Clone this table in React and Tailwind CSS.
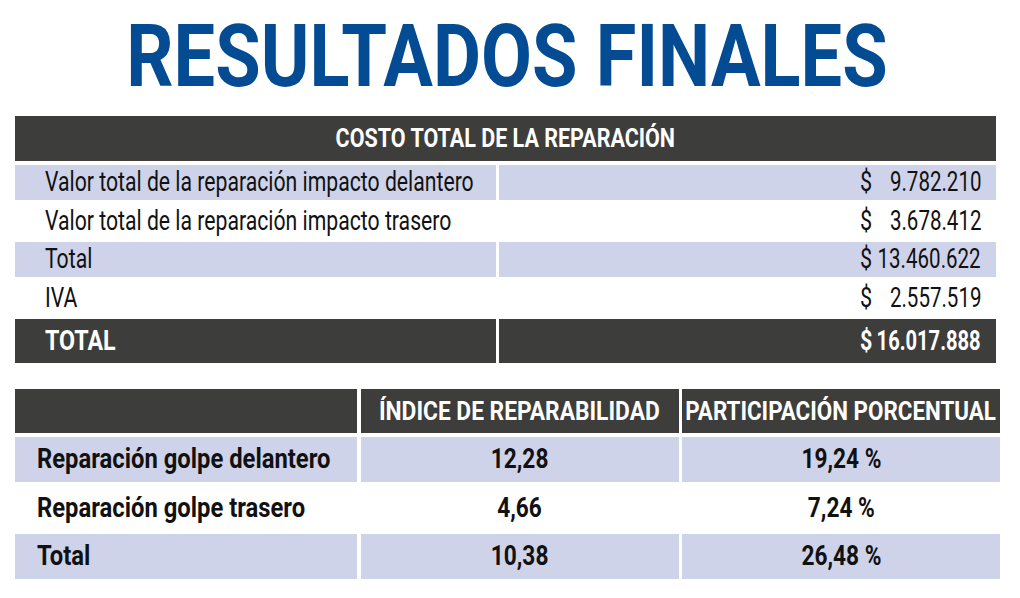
const Money = ({ value, bold }) => (
  <div className={`flex w-[121px] items-center justify-between ${bold ? "font-bold" : ""}`}>
    <span className="inline-block shrink-0 origin-left scale-x-[0.8]">$</span>
    <span className="flex min-w-0 flex-1 justify-end">
      <span className={`inline-block shrink-0 origin-right whitespace-nowrap ${bold ? "scale-x-[0.745]" : "scale-x-[0.76]"}`}>{value}</span>
    </span>
  </div>
);

const costRows = [
  { label: "Valor total de la reparación impacto delantero", value: "9.782.210", shade: true },
  { label: "Valor total de la reparación impacto trasero", value: "3.678.412", shade: false },
  { label: "Total", value: "13.460.622", shade: true },
  { label: "IVA", value: "2.557.519", shade: false },
];

const indexRows = [
  { label: "Reparación golpe delantero", index: "12,28", pct: "19,24 %", shade: true },
  { label: "Reparación golpe trasero", index: "4,66", pct: "7,24 %", shade: false },
  { label: "Total", index: "10,38", pct: "26,48 %", shade: true },
];

export default function App() {
  return (
    <div className="w-[1020px] h-[598px] bg-white text-[#111] font-['Roboto',sans-serif]">
      <h1 className="h-[116px] pt-[13px] pr-[6px] text-center text-[87px] leading-none font-bold text-[#034b93]">
        <span className="inline-block scale-x-[0.85] whitespace-nowrap">RESULTADOS FINALES</span>
      </h1>

      {/* costo total */}
      <div className="ml-[15px] w-[981px] flex flex-col gap-[3.5px]">
        <div className="h-[45px] mb-[0.5px] bg-[#3d3d3b] flex items-center justify-center text-white text-[25px] font-bold leading-none">
          <span className="inline-block scale-x-[0.86] whitespace-nowrap">COSTO TOTAL DE LA REPARACIÓN</span>
        </div>
        {costRows.map((r) => (
          <div key={r.label} className="grid grid-cols-[481px_497px] gap-x-[3px] h-[35px] text-[27px] leading-none">
            <div className={`flex min-w-0 items-center pl-[30px] ${r.shade ? "bg-[#cfd3ea]" : "bg-white"}`}>
              <span className="inline-block origin-left scale-x-[0.785] whitespace-nowrap">{r.label}</span>
            </div>
            <div className={`flex min-w-0 items-center justify-end pr-[15px] ${r.shade ? "bg-[#cfd3ea]" : "bg-white"}`}>
              <Money value={r.value} />
            </div>
          </div>
        ))}
        <div className="grid grid-cols-[481px_497px] gap-x-[3px] h-[44px] text-[27px] leading-none text-white font-bold">
          <div className="flex items-center pl-[30px] bg-[#3d3d3b]">
            <span className="inline-block origin-left scale-x-[0.86]">TOTAL</span>
          </div>
          <div className="flex items-center justify-end pr-[15px] bg-[#3d3d3b]">
            <Money value="16.017.888" bold />
          </div>
        </div>
      </div>

      {/* indice de reparabilidad */}
      <div className="mt-[26px] ml-[15px] w-[985px] flex flex-col gap-[3.5px]">
        <div className="grid grid-cols-[342px_318px_318px] gap-x-[3.5px] h-[44px] text-white text-[25px] font-bold leading-none">
          <div className="bg-[#3d3d3b]"></div>
          <div className="bg-[#3d3d3b] flex min-w-0 items-center justify-center">
            <span className="inline-block shrink-0 scale-x-[0.91] whitespace-nowrap">ÍNDICE DE REPARABILIDAD</span>
          </div>
          <div className="bg-[#3d3d3b] flex min-w-0 items-center justify-center">
            <span className="inline-block shrink-0 scale-x-[0.895] whitespace-nowrap">PARTICIPACIÓN PORCENTUAL</span>
          </div>
        </div>
        {indexRows.map((r) => (
          <div key={r.label} className="grid grid-cols-[342px_318px_318px] gap-x-[3.5px] h-[45px] text-[28px] font-bold leading-none">
            <div className={`flex items-center pl-[22px] ${r.shade ? "bg-[#cfd3ea]" : "bg-white"}`}>
              <span className="inline-block origin-left scale-x-[0.85] whitespace-nowrap">{r.label}</span>
            </div>
            <div className={`flex items-center justify-center ${r.shade ? "bg-[#cfd3ea]" : "bg-white"}`}>
              <span className="inline-block scale-x-[0.81]">{r.index}</span>
            </div>
            <div className={`flex items-center justify-center ${r.shade ? "bg-[#cfd3ea]" : "bg-white"}`}>
              <span className="inline-block scale-x-[0.81]">{r.pct}</span>
            </div>
          </div>
        ))}
      </div>
    </div>
  );
}
